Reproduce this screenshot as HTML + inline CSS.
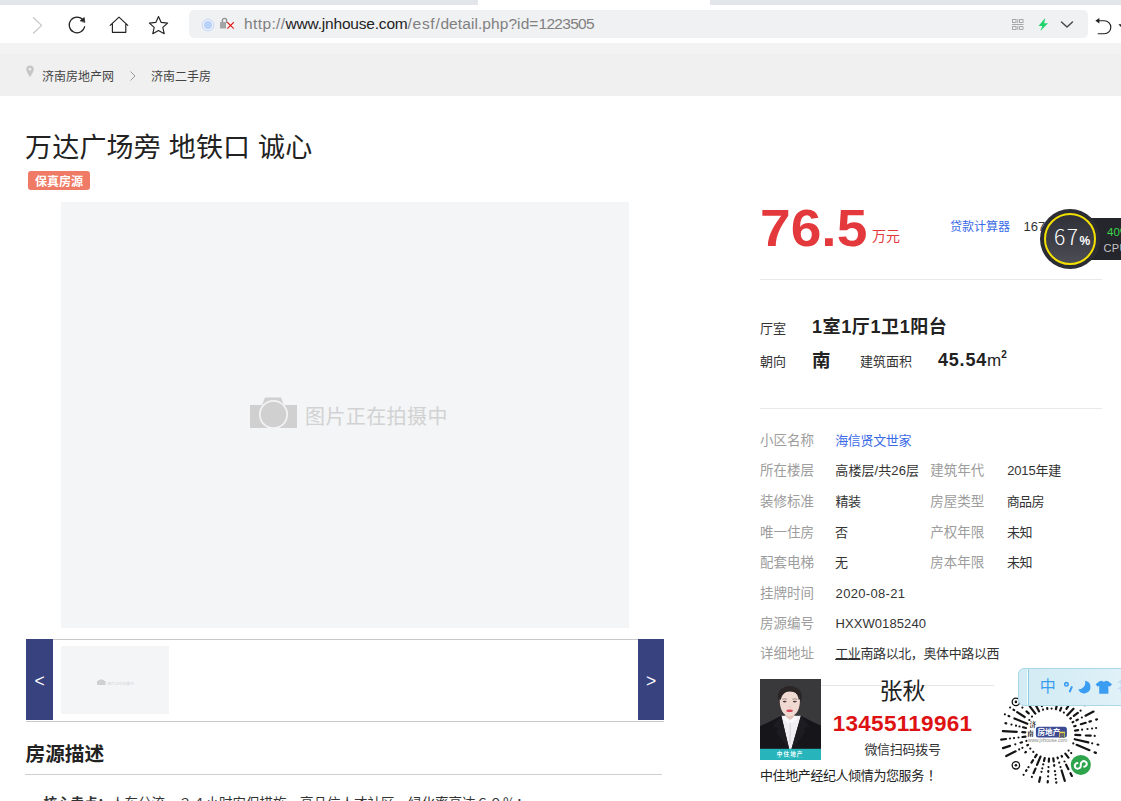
<!DOCTYPE html>
<html lang="zh-CN">
<head>
<meta charset="utf-8">
<title>万达广场旁 地铁口 诚心</title>
<style>
*{margin:0;padding:0;box-sizing:border-box}
html,body{width:1121px;height:801px;overflow:hidden;background:#fff}
body{position:relative;font-family:"Liberation Sans","Noto Sans CJK SC",sans-serif;color:#333;font-size:13px}
.a{position:absolute;white-space:nowrap;line-height:1}
/* browser chrome */
#tabs{left:0;top:0;width:1121px;height:5px;background:#e2e5ea}
#tabsel{left:478px;top:0;width:232px;height:5px;background:#fff}
#toolbar{left:0;top:5px;width:1121px;height:38px;background:#fff}
#addr{left:189px;top:10px;width:899px;height:28px;background:#f0f1f3;border-radius:5px}
#url{left:244px;top:16px;font-size:15.5px;color:#808080}
#url b{font-weight:400;color:#222}
#strip{left:0;top:43px;width:1121px;height:11px;background:#f3f3f3}
#crumb{left:0;top:54px;width:1121px;height:42px;background:#f0f0f0}
.cr{font-size:12px;color:#444;top:70.5px}
/* title */
#title{left:25px;top:135px;font-size:27px;color:#222;font-weight:400;letter-spacing:0.2px}
#badge{left:28px;top:171px;width:62px;height:19px;background:#ef7a65;border-radius:3px;color:#fff;font-size:12px;line-height:23px;overflow:hidden;text-align:center;font-weight:700}
#main{left:61px;top:202px;width:568px;height:426px;background:#f4f5f7}
#ph{left:305px;top:407px;font-size:20px;color:#d2d2d2;letter-spacing:0.4px}
#thumbs{left:26px;top:639px;width:638px;height:83px;border-top:1px solid #c9c9c9;border-bottom:1px solid #c9c9c9;background:#fff}
.nav{top:639px;width:27px;height:81px;background:#38427f;color:#fff;font-size:17.5px;font-weight:400;text-align:center;line-height:84px}
#thumb{left:61px;top:646px;width:108px;height:68px;background:#f4f5f7}
#desc{left:25.5px;top:745px;font-size:19.7px;font-weight:700;color:#222}
#descline{left:25px;top:774px;width:637px;height:1px;background:#cfcfcf}
#core{left:43.5px;top:797px;font-size:13.5px;color:#333}
/* right */
#price{left:760px;top:202px;font-size:52.5px;font-weight:700;color:#e4393c;transform-origin:0 0;transform:scaleX(1.05)}
#wan{left:872px;top:229px;font-size:14px;color:#e4393c}
#calc{left:950px;top:221px;font-size:12px;color:#3a6ae6}
#unit{left:1023.5px;top:220.3px;font-size:13px;color:#333}
.hl{height:1px;background:#e8e8e8;left:760px;width:342px}
.k{font-size:13px;color:#333}
.v{font-size:18px;font-weight:700;color:#222}
.lab{font-size:13.5px;color:#9d9d9d}
.val{font-size:13px;color:#333}
</style>
</head>
<body>
<!-- chrome -->
<div class="a" id="tabs"></div><div class="a" id="tabsel"></div>
<div class="a" id="toolbar"></div>
<div class="a" id="addr"></div>
<svg class="a" style="left:20px;top:8px" width="160" height="32" viewBox="0 0 160 32" fill="none" stroke="#222" stroke-width="1.15" stroke-linecap="round" stroke-linejoin="round">
  <path d="M13.400 9.700 L21.600 17.400 L13.400 25.200" stroke="#c6c6c6" stroke-width="1.200"/>
  <path d="M63.150 12.200 A7.800 7.800 0 1 0 64.630 18.620"/>
  <path d="M64.800 14.200 L64.300 9.500 L60.300 12.600 Z" fill="#222" stroke-width="0.600"/>
  <path d="M90.200 17.400 L99 9.200 L107.800 17.400 M92.400 15.800 V24.300 H105.800 V15.800"/>
  <path d="M138.500 8.500 L141.200 14.400 L147.600 15.100 L142.800 19.400 L144.200 25.700 L138.500 22.500 L132.800 25.700 L134.200 19.400 L129.400 15.100 L135.800 14.400 Z"/>
</svg>
<svg class="a" style="left:198px;top:14px" width="42" height="20" viewBox="0 0 42 20">
  <circle cx="10" cy="11" r="5.900" fill="none" stroke="#c4d8fb" stroke-width="1"/><circle cx="10" cy="11" r="4" fill="#b8d2fb"/>
  <path d="M24.400 9 V6.500 A2.100 2.100 0 0 1 28.600 6.500 V9" fill="none" stroke="#8e8e8e" stroke-width="1.400"/>
  <rect x="22" y="8" width="6" height="6.600" rx="0.500" fill="#a5a5a5"/>
  <path d="M29.300 8.300 L35.800 14.600 M35.800 8.300 L29.300 14.600" stroke="#fff" stroke-width="2.600" fill="none" opacity="0.800"/>
  <path d="M29.300 8.300 L35.800 14.600 M35.800 8.300 L29.300 14.600" stroke="#e02020" stroke-width="1.250" fill="none"/>
</svg>
<div class="a" id="url"><span style="letter-spacing:0.39px">http://</span><b style="letter-spacing:-0.19px">www.jnhouse.com</b><span style="letter-spacing:0.7px">/esf/</span><span style="letter-spacing:0.08px">detail.php?id=</span><span style="letter-spacing:-0.69px">1223505</span></div>
<svg class="a" style="left:1008px;top:14px" width="113" height="22" viewBox="0 0 113 22" fill="none">
  <g stroke="#a8a8a8" stroke-width="1">
    <rect x="4.500" y="5.500" width="3.500" height="3"/><rect x="11.500" y="5.500" width="3.500" height="3"/><rect x="4.500" y="12.500" width="3.500" height="3"/>
    <path d="M4 10.500 H15.500 M11.500 12.500 H15 V15.500 H11.500 Z M9.750 5 V9 M9.750 12 V16"/>
  </g>
  <path d="M37.200 4 L30.500 12 L34.300 12 L32.300 17 L40 9.300 L36.200 9.300 Z" fill="#21d36f"/>
  <path d="M53.500 8 L59 13 L64.500 8" stroke="#444" stroke-width="1.400" stroke-linecap="round" stroke-linejoin="round"/>
  <path d="M90 6.750 H96.300 A6.500 6.500 0 0 1 96.300 19.750 H90.200" stroke="#222" stroke-width="1.200" stroke-linecap="round"/>
  <path d="M87.300 6.750 L91.400 4 L91.400 9.500 Z" fill="#222"/>
  <path d="M110.300 10.300 L116.300 10.300 L113.300 13.400 Z" fill="#222"/>
</svg>
<div class="a" id="strip"></div>
<div class="a" id="crumb"></div>
<svg class="a" style="left:25px;top:65px" width="10" height="13" viewBox="0 0 10 13"><path d="M5 0.500 A3.800 3.800 0 0 0 1.200 4.300 C1.200 7 5 12 5 12 C5 12 8.800 7 8.800 4.300 A3.800 3.800 0 0 0 5 0.500 Z" fill="#c6c6c6"/><circle cx="5" cy="4.200" r="1.300" fill="#f0f0f0"/></svg>
<div class="a cr" style="left:42px">济南房地产网</div>
<svg class="a" style="left:129px;top:70px" width="8" height="12" viewBox="0 0 8 12"><path d="M1.500 1.500 L6 6 L1.500 10.500" fill="none" stroke="#999" stroke-width="1"/></svg>
<div class="a cr" style="left:151px">济南二手房</div>

<!-- left column -->
<div class="a" id="title">万达广场旁 地铁口 诚心</div>
<div class="a" id="badge">保真房源</div>
<div class="a" id="main"></div>
<svg class="a" style="left:249px;top:396px" width="50" height="34" viewBox="0 0 50 34">
  <path d="M1 9 H13 L16 1.500 H32 L35 9 H48 V32 H1 Z" fill="#d0d0d0"/>
  <circle cx="24.500" cy="18.500" r="14.500" fill="#f4f4f6"/>
  <circle cx="24.500" cy="18.500" r="12.800" fill="#d0d0d0"/>
</svg>
<div class="a" id="ph">图片正在拍摄中</div>
<div class="a" id="thumbs"></div>
<div class="a nav" style="left:26px">&lt;</div>
<div class="a nav" style="left:638px;width:26px">&gt;</div>
<div class="a" id="thumb"></div>
<svg class="a" style="left:97px;top:679px" width="40" height="8" viewBox="0 0 40 8"><path d="M0 2 H1.500 V1 H3.200 V0.300 H5.400 V1 H7 V2 H8.600 V6 H0 Z" fill="#d0d0d2"/><text x="10.400" y="5.600" font-size="3.800" fill="#d4d4d6" font-family="Liberation Sans, Noto Sans CJK SC, sans-serif">图片正在拍摄中</text></svg>
<div class="a" id="desc">房源描述</div>
<div class="a" id="descline"></div>
<div class="a" id="core"><b>核心卖点：</b>人车分流，２４小时安保措施，高品信人才社区，绿化率高达６０％；</div>

<!-- right column -->
<div class="a" id="price">76.5</div>
<div class="a" id="wan">万元</div>
<div class="a" id="calc">贷款计算器</div>
<div class="a" id="unit">16798元/㎡</div>
<div class="a hl" style="top:279px"></div>
<div class="a k" style="left:760px;top:322px">厅室</div>
<div class="a v" style="left:812px;top:318px;letter-spacing:0.6px">1室1厅1卫1阳台</div>
<div class="a k" style="left:760px;top:355px">朝向</div>
<div class="a v" style="left:812px;top:351.500px;font-size:18.5px">南</div>
<div class="a k" style="left:860px;top:355px">建筑面积</div>
<div class="a v" style="left:938px;top:351px"><span style="letter-spacing:0.8px">45.54</span><span style="font-weight:400;font-size:17px">m</span><span style="font-size:10px;position:relative;top:-8px">2</span></div>
<div class="a hl" style="top:408px"></div>
<div class="a lab" style="left:760px;top:434px">小区名称</div>
<div class="a val" style="left:835.2px;top:434px;letter-spacing:-0.34px"><span style="color:#3a6ae6">海信贤文世家</span></div>
<div class="a lab" style="left:760px;top:464px">所在楼层</div>
<div class="a val" style="left:835.3px;top:464px;letter-spacing:0.09px">高楼层/共26层</div>
<div class="a lab" style="left:930.2px;top:464px">建筑年代</div>
<div class="a val" style="left:1007.2px;top:464px;letter-spacing:-0.16px">2015年建</div>
<div class="a lab" style="left:760px;top:495px">装修标准</div>
<div class="a val" style="left:835.6px;top:495px;letter-spacing:-0.62px">精装</div>
<div class="a lab" style="left:930.2px;top:495px">房屋类型</div>
<div class="a val" style="left:1006.8px;top:495px;letter-spacing:-0.71px">商品房</div>
<div class="a lab" style="left:760px;top:526px">唯一住房</div>
<div class="a val" style="left:835px;top:526px">否</div>
<div class="a lab" style="left:930.2px;top:526px">产权年限</div>
<div class="a val" style="left:1007px;top:526px;letter-spacing:-0.4px">未知</div>
<div class="a lab" style="left:760px;top:556px">配套电梯</div>
<div class="a val" style="left:835px;top:556px">无</div>
<div class="a lab" style="left:930.2px;top:556px">房本年限</div>
<div class="a val" style="left:1007px;top:556px;letter-spacing:-0.4px">未知</div>
<div class="a lab" style="left:760px;top:587px">挂牌时间</div>
<div class="a val" style="left:835.6px;top:587px;letter-spacing:0.32px">2020-08-21</div>
<div class="a lab" style="left:760px;top:617px">房源编号</div>
<div class="a val" style="left:835.4px;top:617px;letter-spacing:0.10px">HXXW0185240</div>
<div class="a lab" style="left:760px;top:647px">详细地址</div>
<div class="a val" style="left:835.2px;top:647px;letter-spacing:-0.39px"><span style="text-decoration:underline">工业</span>南路以北，奥体中路以西</div>
<div class="a" style="left:821px;top:685px;width:173px;height:1px;background:#e6e6e6"></div>
<svg class="a" style="left:760px;top:679px" width="61.200" height="81" viewBox="0 0 61.200 81">
  <rect width="61.200" height="81" fill="#39383b"/>
  <g style="filter:blur(0.55px)">
  <path d="M-2 48 L8 43.500 L21.300 36.800 L40.900 36.800 L53 43 L63 47.500 V72 H-2 Z" fill="#16151a"/>
  <path d="M21.300 36.800 L40.900 36.800 L31.300 70.500 L29.300 70.500 Z" fill="#f1eff4"/>
  <path d="M21.300 36.800 L12.500 47.500 L18.500 49.500 L16 52.500 L29.300 70.500 Z" fill="#1d1c22"/>
  <path d="M40.900 36.800 L49.500 47.500 L43.500 49.500 L46 52.500 L31.300 70.500 Z" fill="#1d1c22"/>
  <path d="M29.600 44 L30.800 44 L31 62 L30.200 66 L29.400 62 Z" fill="#dcd9e0"/>
  <rect x="25.300" y="32" width="9" height="8.500" fill="#e3c4ba"/>
  <path d="M24.800 36.500 L30 41.500 L35 36.500 L37 40 L31.500 44.500 L30 42.500 L28.500 44.500 L23 40 Z" fill="#faf9fb"/>
  <ellipse cx="29.800" cy="17.500" rx="12" ry="10.500" fill="#2b2526"/>
  <path d="M19.700 21 C19.700 9.500 40 9.500 40 21 C40 29 37 37.300 29.850 37.300 C22.700 37.300 19.700 29 19.700 21 Z" fill="#f0d9d1"/>
  <path d="M19.500 20 C20 13 25 10.300 30.500 11.300 C26.500 12 22 14.500 20.800 21 Z" fill="#2b2526"/>
  <path d="M40.100 20 C39.600 13 35.500 10.300 30.500 11.300 C34.500 12 37.800 14.500 38.900 21 Z" fill="#2b2526"/>
  <ellipse cx="24.600" cy="22.600" rx="2" ry="0.800" fill="#4a3a3c"/>
  <ellipse cx="34.800" cy="22.600" rx="2" ry="0.800" fill="#4a3a3c"/>
  <path d="M22.200 20.300 Q24.600 19.300 27 20.300 M32.400 20.300 Q34.800 19.300 37.200 20.300" stroke="#6a5654" stroke-width="0.600" fill="none"/>
  <ellipse cx="29.600" cy="31.700" rx="3.300" ry="1.300" fill="#d4485c"/>
  <path d="M28.600 27.800 Q29.700 28.600 30.800 27.800" stroke="#d9b5aa" stroke-width="0.700" fill="none"/>
  </g>
  <rect y="69.800" width="61.200" height="11.200" fill="#27b4ba"/>
  <text x="30.200" y="77" font-size="5.600" font-weight="700" fill="#f2ffff" text-anchor="middle" letter-spacing="1.100" font-family="Liberation Sans, Noto Sans CJK SC, sans-serif">中住地产</text>
  <text x="30.200" y="79.400" font-size="1.800" fill="#9fe3e6" text-anchor="middle" letter-spacing="1.300" font-family="Liberation Sans, sans-serif">REAL ESTATE</text>
</svg>
<div class="a" style="left:821px;width:163px;top:680px;font-size:23px;color:#222;text-align:center">张秋</div>
<div class="a" style="left:821px;width:163px;top:713px;font-size:22.5px;font-weight:700;color:#de1212;text-align:center;letter-spacing:0.3px">13455119961</div>
<div class="a" style="left:821px;width:163px;top:743px;font-size:13px;color:#333;text-align:center;letter-spacing:-0.3px">微信扫码拨号</div>
<div class="a" style="left:760px;top:768.700px;font-size:13px;color:#222;letter-spacing:-0.4px">中住地产经纪人倾情为您服务<span style="margin-left:4px">！</span></div>
<svg class="a" style="left:1000px;top:683px" width="104" height="104" viewBox="0 0 104 104">
<path d="M75.3 51.9L80.3 52.2M85.8 52.5L90.7 52.7M94.7 52.9L94.7 52.9M74.7 56.2L88.3 59.4M92.2 60.3L92.2 60.3M97.6 61.5L98.3 61.7M73.3 60.4L73.3 60.4M76.6 61.8L89.5 67.2M94.6 69.4L95.9 69.9M68.6 67.6L68.6 67.6M71.2 70.1L71.2 70.1M65.3 70.6L68.4 74.6M61.6 72.9L62.0 73.6M64.5 78.5L64.5 78.5M66.1 81.7L68.4 86.2M70.5 90.2L71.9 92.9M57.6 74.5L57.8 75.3M59.2 79.7L59.2 79.7M60.5 84.1L60.5 84.1M61.6 87.5L64.8 97.9M53.3 75.4L53.7 78.4M54.2 82.0L54.2 82.8M54.9 88.2L54.9 88.2M55.4 91.8L55.4 91.8M55.8 95.8L55.8 95.8M56.3 99.3L56.3 99.7M49.0 75.6L48.8 78.6M48.5 84.1L48.5 84.1M48.3 88.0L48.3 88.8M48.1 93.4L48.1 93.4M47.8 98.0L47.7 99.5M44.7 75.0L44.0 77.9M43.2 81.4L43.2 81.4M42.3 85.3L42.3 85.3M41.5 88.8L41.5 88.8M40.2 94.2L39.2 98.8M40.5 73.6L37.0 81.9M35.5 85.6L33.5 90.2M31.9 93.9L31.9 93.9M36.7 71.6L35.1 74.1M33.1 77.1L31.5 79.6M28.5 84.2L28.5 84.2M26.5 87.2L26.1 87.9M23.6 91.8L23.6 91.8M33.3 68.9L33.3 68.9M30.3 65.6L30.3 65.6M25.9 69.0L25.3 69.4M28.0 61.9L27.3 62.3M22.4 64.8L22.4 64.8M19.2 66.4L19.2 66.4M15.6 68.3L6.2 73.1M26.4 57.9L26.4 57.9M22.0 59.3L20.6 59.7M15.3 61.3L15.3 61.3M10.0 62.9L3.0 65.1M25.5 53.6L22.5 54.0M18.5 54.5L18.5 54.5M14.0 55.1L14.0 55.1M10.0 55.5L10.0 55.5M6.0 56.0L1.2 56.6M25.3 49.3L22.3 49.1M16.8 48.8L2.9 48.1M25.9 45.0L23.0 44.3M19.5 43.5L19.5 43.5M16.0 42.7L16.0 42.7M11.5 41.6L11.5 41.6M6.2 40.4L5.4 40.2M27.3 40.8L14.4 35.4M9.3 33.2L8.6 32.9M4.9 31.3L4.9 31.3M29.3 37.0L29.3 37.0M24.7 34.0L17.2 29.1M14.2 27.1L13.5 26.7M10.1 24.5L10.1 24.5M32.0 33.6L32.0 33.6M28.7 30.4L26.5 28.4M22.4 24.6L22.4 24.6M35.3 30.6L29.8 23.4M27.4 20.3L27.4 20.3M24.7 16.6L24.7 16.6M21.4 12.2L20.5 11.1M39.0 28.3L32.6 15.9M31.0 12.6L31.0 12.6M28.5 7.7L27.8 6.5M43.0 26.7L43.0 26.7M41.9 23.2L37.8 9.9M36.8 6.4L35.8 3.3M47.3 25.8L47.2 25.0M46.6 20.4L46.6 20.4M46.2 16.9L46.2 16.9M45.5 11.4L44.4 2.5M51.6 25.6L51.6 25.6M51.8 21.6L51.9 20.1M52.1 15.5L52.1 15.5M52.4 10.1L52.4 10.1M52.7 4.6L52.7 4.6M55.9 26.2L59.1 12.6M59.9 9.1L61.4 2.4M60.1 27.6L61.2 24.8M62.6 21.5L68.1 8.6M69.5 5.3L69.5 5.3M63.9 29.6L63.9 29.6M66.4 25.8L68.1 23.3M70.6 19.4L72.2 16.9M75.2 12.3L77.3 9.1M67.3 32.3L73.5 25.7M70.3 35.6L70.9 35.1M73.8 32.9L77.8 29.9M80.6 27.7L80.6 27.7M72.6 39.3L73.3 38.9M76.5 37.3L77.8 36.6M81.9 34.5L81.9 34.5M85.5 32.7L93.5 28.6M74.2 43.3L75.6 42.9M80.9 41.2L85.7 39.8M89.5 38.6L90.9 38.2M96.2 36.6L97.0 36.3M75.1 47.6L78.1 47.2M82.1 46.7L82.1 46.7M87.5 46.0L87.5 46.0M92.1 45.5L92.1 45.5M96.1 45.0L96.1 45.0" stroke="#141414" stroke-width="2.2" stroke-linecap="round" fill="none"/>
<circle cx="15.9" cy="18.9" r="3.700" fill="none" stroke="#141414" stroke-width="1.300"/><circle cx="15.9" cy="18.9" r="1.300" fill="#141414"/>
<circle cx="15.9" cy="82.3" r="3.700" fill="none" stroke="#141414" stroke-width="1.300"/><circle cx="15.9" cy="82.3" r="1.300" fill="#141414"/>
<circle cx="84.7" cy="18.9" r="3.700" fill="none" stroke="#141414" stroke-width="1.300"/><circle cx="84.7" cy="18.9" r="1.300" fill="#141414"/>
<circle cx="80.8" cy="81.9" r="10" fill="#2ea44c"/>
<path d="M79.6 84.9 a2.800 2.800 0 1 1 -2.200 -4.800 M82.0 78.9 a2.800 2.800 0 1 1 2.200 4.800 M79.6 84.9 C82.0 84.4 79.6 79.4 82.0 78.9" fill="none" stroke="#fff" stroke-width="2" stroke-linecap="round"/>
<rect x="35.9" y="43.7" width="31" height="10.800" rx="2.500" fill="#3c4b93"/>
<text x="48.9" y="52.1" font-size="7.600" font-weight="700" fill="#fff" text-anchor="middle" font-family="Liberation Sans, Noto Sans CJK SC, sans-serif">房地产</text>
<rect x="59.2" y="48.7" width="5.800" height="5.700" fill="#f2d93c"/>
<text x="62.1" y="53.7" font-size="5" font-weight="700" fill="#2a3a80" text-anchor="middle" font-family="Liberation Sans, Noto Sans CJK SC, sans-serif">网</text>
<text x="32.8" y="43.5" font-size="6.500" font-weight="700" fill="#222" text-anchor="middle" font-family="Liberation Serif, Noto Serif CJK SC, serif">济</text>
<text x="30.4" y="53.3" font-size="6.500" font-weight="700" fill="#222" text-anchor="middle" font-family="Liberation Serif, Noto Serif CJK SC, serif">南</text>
<text x="47.6" y="58.8" font-size="4.900" fill="#8a8a8a" text-anchor="middle" font-family="Liberation Sans, sans-serif">www.jnhouse.com</text>
</svg>

<div class="a" style="left:1018px;top:667.800px;width:112px;height:37.800px;background:linear-gradient(90deg,#d3ebf4,#d9eef6 60%,#e3f2f8);border:1px solid #a9d9e8;border-radius:6px"></div>
<div class="a" style="left:1026.800px;top:668.800px;width:1px;height:35.800px;background:#f4fbfd"></div>
<div class="a" style="left:1027.700px;top:668.800px;width:1px;height:35.800px;background:#8fcde0"></div>
<div class="a" style="left:1039.800px;top:679px;font-size:16px;color:#3b9df1;font-weight:400;font-family:'Liberation Sans','Noto Sans CJK SC',sans-serif">中</div>
<svg class="a" style="left:1060px;top:676px" width="61" height="22" viewBox="0 0 61 22">
  <circle cx="6.400" cy="8.300" r="1.700" fill="none" stroke="#3b9df1" stroke-width="1.600"/>
  <path d="M11.800 11 L9.800 15.500" stroke="#3b9df1" stroke-width="1.900" stroke-linecap="round"/>
  <path d="M25 4.800 A6.300 6.300 0 1 1 18.300 13.300 A6.600 6.600 0 0 0 25 4.800 Z" fill="#3b9df1"/>
  <path d="M39.500 5.200 L42 4.800 Q43.800 6.600 45.600 4.800 L48.200 5.200 L52 8.300 L49.800 10.800 L48.400 9.800 V17.700 H39.200 V9.800 L37.800 10.800 L35.600 8.300 Z" fill="#3b9df1"/>
  <path d="M58 7 L61 4.500 V9 M58 13 L61 11 V16" fill="none" stroke="#bcdcf3" stroke-width="1.200"/>
</svg>

<div class="a" style="left:1069px;top:218px;width:60px;height:42px;background:#25262b;border-radius:2px"></div>
<div class="a" style="left:1107px;top:226.500px;font-size:11.5px;color:#3fd24a">40%</div>
<div class="a" style="left:1103.500px;top:242.700px;font-size:11px;color:#c4c4c4;letter-spacing:0.3px">CPU</div>
<div class="a" style="left:1039.700px;top:208.800px;width:60px;height:60px;border-radius:50%;background:#2c2d34"></div>
<div class="a" style="left:1043.700px;top:212.800px;width:52px;height:52px;border-radius:50%;border:2px solid #f2e000;background:linear-gradient(#303138,#4b4c54)"></div>
<div class="a" style="left:1054px;top:223px;font-size:21px;color:#fff;font-family:'Noto Sans CJK SC','Liberation Sans',sans-serif;font-weight:300;letter-spacing:1.6px;line-height:26px">67</div>
<div class="a" style="left:1079.500px;top:234.500px;font-size:12px;color:#fff;font-weight:700">%</div>
</body>
</html>
